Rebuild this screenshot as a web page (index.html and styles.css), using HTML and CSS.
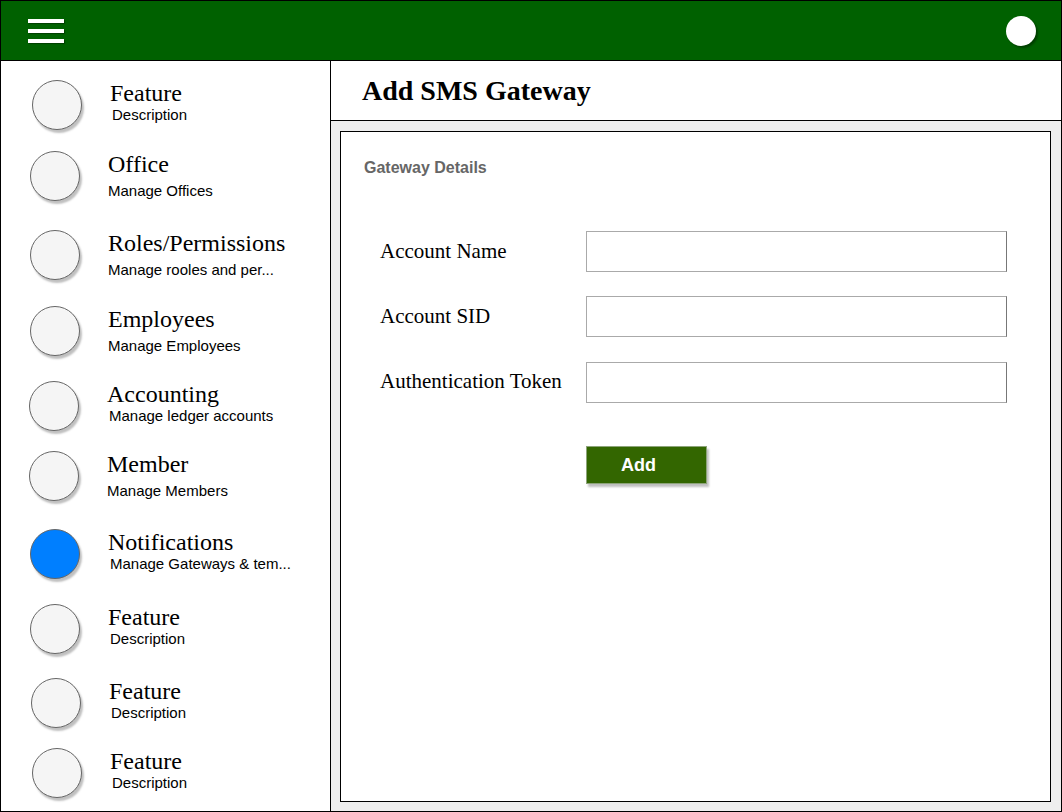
FILE: index.html
```html
<!DOCTYPE html>
<html lang="en">
<head>
    <meta charset="UTF-8">
    <meta name="viewport" content="width=device-width, initial-scale=1.0">
    <title>Add SMS Gateway</title>
    <link rel="stylesheet" href="styles.css">
</head>
<body>
    <div class="app">
        <header class="topbar">
            <button class="menu-btn" aria-label="Menu">
                <span></span><span></span><span></span>
            </button>
            <div class="avatar"></div>
        </header>

        <div class="layout">
            <nav class="sidebar">
                <div class="nav-item">
                    <div class="nav-icon"></div>
                    <div class="nav-text">
                        <div class="nav-title">Feature</div>
                        <div class="nav-desc">Description</div>
                    </div>
                </div>
                <div class="nav-item spaced">
                    <div class="nav-icon"></div>
                    <div class="nav-text">
                        <div class="nav-title">Office</div>
                        <div class="nav-desc">Manage Offices</div>
                    </div>
                </div>
                <div class="nav-item spaced">
                    <div class="nav-icon"></div>
                    <div class="nav-text">
                        <div class="nav-title">Roles/Permissions</div>
                        <div class="nav-desc">Manage rooles and per...</div>
                    </div>
                </div>
                <div class="nav-item spaced">
                    <div class="nav-icon"></div>
                    <div class="nav-text">
                        <div class="nav-title">Employees</div>
                        <div class="nav-desc">Manage Employees</div>
                    </div>
                </div>
                <div class="nav-item">
                    <div class="nav-icon"></div>
                    <div class="nav-text">
                        <div class="nav-title">Accounting</div>
                        <div class="nav-desc">Manage ledger accounts</div>
                    </div>
                </div>
                <div class="nav-item spaced">
                    <div class="nav-icon"></div>
                    <div class="nav-text">
                        <div class="nav-title">Member</div>
                        <div class="nav-desc">Manage Members</div>
                    </div>
                </div>
                <div class="nav-item active">
                    <div class="nav-icon"></div>
                    <div class="nav-text">
                        <div class="nav-title">Notifications</div>
                        <div class="nav-desc">Manage Gateways &amp; tem...</div>
                    </div>
                </div>
                <div class="nav-item">
                    <div class="nav-icon"></div>
                    <div class="nav-text">
                        <div class="nav-title">Feature</div>
                        <div class="nav-desc">Description</div>
                    </div>
                </div>
                <div class="nav-item">
                    <div class="nav-icon"></div>
                    <div class="nav-text">
                        <div class="nav-title">Feature</div>
                        <div class="nav-desc">Description</div>
                    </div>
                </div>
                <div class="nav-item">
                    <div class="nav-icon"></div>
                    <div class="nav-text">
                        <div class="nav-title">Feature</div>
                        <div class="nav-desc">Description</div>
                    </div>
                </div>
            </nav>

            <main class="main">
                <div class="page-header">
                    <h1>Add SMS Gateway</h1>
                </div>
                <div class="content">
                    <section class="panel">
                        <h2 class="panel-title">Gateway Details</h2>
                        <form class="form">
                            <label for="accountName">Account Name</label>
                            <input type="text" id="accountName">
                            <label for="accountSid">Account SID</label>
                            <input type="text" id="accountSid">
                            <label for="authToken">Authentication Token</label>
                            <input type="text" id="authToken">
                            <button type="button" class="btn-add">Add</button>
                        </form>
                    </section>
                </div>
            </main>
        </div>
    </div>
</body>
</html>
```

FILE: styles.css
```css
/* Base */
* {
    margin: 0;
    padding: 0;
    box-sizing: border-box;
}

body {
    font-family: 'Liberation Sans', Arial, sans-serif;
    color: #000;
    background: #fff;
}

.app {
    width: 1062px;
    height: 812px;
    border: 1px solid #000;
    display: flex;
    flex-direction: column;
}

/* Top bar */
.topbar {
    height: 60px;
    flex-shrink: 0;
    background: #006100;
    border-bottom: 1px solid #000;
    display: flex;
    justify-content: space-between;
    align-items: center;
    padding: 0 25px 0 27px;
}

.menu-btn {
    background: none;
    border: none;
    width: 36px;
    display: flex;
    flex-direction: column;
    gap: 6px;
    cursor: pointer;
}

.menu-btn span {
    display: block;
    height: 4px;
    background: #fff;
    box-shadow: 1px 1px 1px rgba(0, 0, 0, 0.35);
}

.avatar {
    width: 30px;
    height: 30px;
    border-radius: 50%;
    background: #fff;
    box-shadow: 2px 2px 2px rgba(0, 0, 0, 0.35);
}

/* Layout */
.layout {
    flex: 1;
    display: flex;
    min-height: 0;
}

/* Sidebar */
.sidebar {
    width: 330px;
    flex-shrink: 0;
    border-right: 1px solid #000;
    padding: 19px 0 0 29px;
    display: flex;
    flex-direction: column;
    overflow: hidden;
}

.nav-item {
    display: flex;
    align-items: flex-start;
    gap: 28px;
    height: 75px;
    flex-shrink: 0;
}

.nav-item:nth-child(1) { height: 71px; margin-left: 2px; }
.nav-item:nth-child(2) { height: 79px; }
.nav-item:nth-child(3) { height: 76px; }
.nav-item:nth-child(5) { height: 70px; margin-left: -1px; }
.nav-item:nth-child(6) { height: 78px; margin-left: -1px; }
.nav-item:nth-child(8) { height: 74px; }
.nav-item:nth-child(9) { height: 70px; margin-left: 1px; }
.nav-item:nth-child(10) { height: 56px; margin-left: 2px; }

.nav-icon {
    width: 50px;
    height: 50px;
    flex-shrink: 0;
    border-radius: 50%;
    background: #f5f5f5;
    border: 1px solid #666;
    box-shadow: 2px 3px 2px rgba(0, 0, 0, 0.25);
}

.nav-item.active .nav-icon {
    background: #007fff;
}

.nav-title {
    font-family: 'Liberation Serif', 'Times New Roman', serif;
    font-size: 24px;
    line-height: 26px;
}

.nav-desc {
    font-size: 15px;
    line-height: 17px;
    padding-left: 2px;
}

.nav-item.spaced .nav-desc {
    margin-top: 5px;
    padding-left: 0;
}

/* Main */
.main {
    flex: 1;
    display: flex;
    flex-direction: column;
    min-width: 0;
}

.page-header {
    height: 60px;
    flex-shrink: 0;
    border-bottom: 1px solid #000;
    display: flex;
    align-items: center;
    padding-left: 31px;
}

.page-header h1 {
    font-family: 'Liberation Serif', 'Times New Roman', serif;
    font-size: 28px;
    font-weight: bold;
}

.content {
    flex: 1;
    background: #eeeeee;
    padding: 10px 10px 9px 9px;
    display: flex;
}

.panel {
    flex: 1;
    background: #fff;
    border: 1px solid #000;
    padding: 27px 0 0 23px;
}

.panel-title {
    font-size: 16px;
    font-weight: bold;
    color: #666;
    line-height: 18px;
}

/* Form */
.form {
    display: grid;
    grid-template-columns: 206px 421px;
    grid-template-rows: 41px 41px 41px auto;
    row-gap: 24px;
    margin: 54px 0 0 16px;
    align-items: center;
}

.form label {
    font-family: 'Liberation Serif', 'Times New Roman', serif;
    font-size: 21px;
}

.form input {
    height: 41px;
    border: 1px solid #aaa;
    border-right-color: #777;
    background: #fff;
    font-size: 16px;
    padding: 0 8px;
    outline: none;
}

.form input:nth-of-type(3) {
    margin-top: 2px;
}

.btn-add {
    grid-column: 2;
    justify-self: start;
    margin-top: 20px;
    width: 121px;
    height: 38px;
    background: #336600;
    color: #fff;
    border: 1px solid #8da47a;
    box-shadow: 2px 3px 2px rgba(0, 0, 0, 0.25);
    font-family: 'Liberation Sans', Arial, sans-serif;
    font-size: 18px;
    font-weight: bold;
    text-align: left;
    padding-left: 34px;
    cursor: pointer;
}
```
